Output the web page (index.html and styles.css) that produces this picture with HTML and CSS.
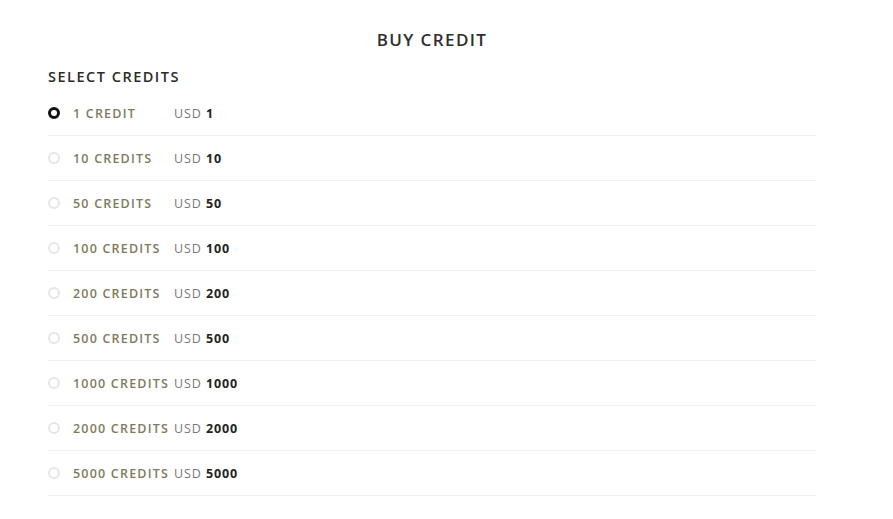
FILE: index.html
```html
<!DOCTYPE html>
<html lang="en">
<head>
  <meta charset="UTF-8">
  <meta name="viewport" content="width=device-width, initial-scale=1.0">
  <title>Buy Credit</title>
  <link rel="stylesheet" href="styles.css">
</head>
<body>
  <div class="container">
    <h1 class="page-title">BUY CREDIT</h1>
    <h2 class="section-title">SELECT CREDITS</h2>

    <ul class="credit-list">
      <li class="credit-row">
        <span class="radio checked"></span>
        <span class="credit-name">1 CREDIT</span>
        <span class="credit-price">USD <strong>1</strong></span>
      </li>
      <li class="credit-row">
        <span class="radio"></span>
        <span class="credit-name">10 CREDITS</span>
        <span class="credit-price">USD <strong>10</strong></span>
      </li>
      <li class="credit-row">
        <span class="radio"></span>
        <span class="credit-name">50 CREDITS</span>
        <span class="credit-price">USD <strong>50</strong></span>
      </li>
      <li class="credit-row">
        <span class="radio"></span>
        <span class="credit-name">100 CREDITS</span>
        <span class="credit-price">USD <strong>100</strong></span>
      </li>
      <li class="credit-row">
        <span class="radio"></span>
        <span class="credit-name">200 CREDITS</span>
        <span class="credit-price">USD <strong>200</strong></span>
      </li>
      <li class="credit-row">
        <span class="radio"></span>
        <span class="credit-name">500 CREDITS</span>
        <span class="credit-price">USD <strong>500</strong></span>
      </li>
      <li class="credit-row">
        <span class="radio"></span>
        <span class="credit-name">1000 CREDITS</span>
        <span class="credit-price">USD <strong>1000</strong></span>
      </li>
      <li class="credit-row">
        <span class="radio"></span>
        <span class="credit-name">2000 CREDITS</span>
        <span class="credit-price">USD <strong>2000</strong></span>
      </li>
      <li class="credit-row">
        <span class="radio"></span>
        <span class="credit-name">5000 CREDITS</span>
        <span class="credit-price">USD <strong>5000</strong></span>
      </li>
    </ul>
  </div>
</body>
</html>
```

FILE: styles.css
```css
body {
  margin: 0;
  background: #fff;
  font-family: "Open Sans", "Liberation Sans", sans-serif;
  color: #333;
}

.container {
  width: 768px;
  margin-left: 48px;
  padding-top: 30px;
}

.page-title {
  margin: 0;
  font-size: 17px;
  font-weight: 600;
  letter-spacing: 1.4px;
  text-align: center;
  color: #2e2e2e;
  line-height: 20px;
}

.section-title {
  margin: 17px 0 0;
  font-size: 14.5px;
  font-weight: 600;
  letter-spacing: 1.5px;
  color: #2b2b2b;
  line-height: 20px;
}

.credit-list {
  list-style: none;
  margin: 4px 0 0;
  padding: 0;
}

.credit-row {
  display: flex;
  align-items: center;
  height: 44px;
  border-bottom: 1px solid #f0f0f0;
  font-size: 12.5px;
}

.radio {
  width: 8px;
  height: 8px;
  border: 2px solid #e6e6e6;
  border-radius: 50%;
  margin-right: 13px;
  flex-shrink: 0;
}

.radio.checked {
  border: 3px solid #111;
  width: 6px;
  height: 6px;
}

.credit-name {
  width: 101px;
  color: #7d7b5c;
  font-weight: 600;
  letter-spacing: 1.2px;
  white-space: nowrap;
}

.credit-price {
  color: #777;
  letter-spacing: 0.9px;
}

.credit-price strong {
  color: #222;
  font-weight: 700;
}
```
